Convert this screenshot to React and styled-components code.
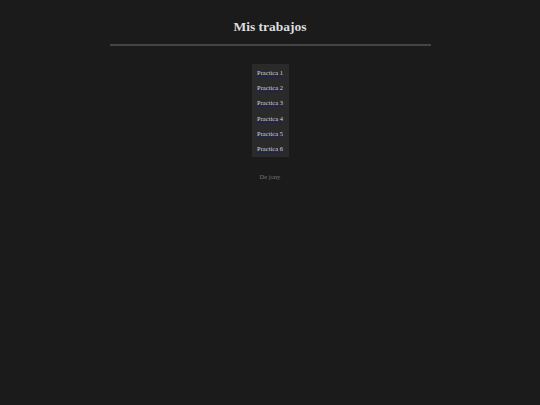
import styled, { createGlobalStyle } from "styled-components";

const GlobalStyle = createGlobalStyle`
  html, body {
    margin: 0;
    padding: 0;
    background-color: #1b1b1b;
    font-family: "Liberation Serif", "Times New Roman", serif;
  }
`;

const Page = styled.div`
  min-height: 405px;
  display: flex;
  flex-direction: column;
  align-items: center;
  padding-top: 18px;
  box-sizing: border-box;
`;

const Title = styled.h1`
  margin: 0;
  font-size: 13.5px;
  font-weight: bold;
  color: #dedede;
  line-height: 18px;
`;

const Divider = styled.hr`
  width: 321px;
  height: 0;
  margin: 8px 0 0 0;
  border: none;
  border-top: 2px solid #444;
`;

const Menu = styled.ul`
  list-style: none;
  margin: 18px 0 0 0;
  padding: 1px 5px;
  width: 27px;
  background-color: #2a2a2a;
  display: flex;
  flex-direction: column;
`;

const Item = styled.li`
  height: 15.2px;
  display: flex;
  align-items: center;
  justify-content: center;
  white-space: nowrap;
`;

const Link = styled.a`
  font-size: 6.5px;
  color: #d2d2de;
  text-decoration: underline;
  text-decoration-color: #1e1e6a;
`;

const Footer = styled.p`
  margin: 16px 0 0 0;
  font-size: 6.5px;
  color: #777;
`;

const practicas = [1, 2, 3, 4, 5, 6];

export default function App() {
  return (
    <>
      <GlobalStyle />
      <Page>
        <Title>Mis trabajos</Title>
        <Divider />
        <Menu>
          {practicas.map((n) => (
            <Item key={n}>
              <Link href="#">Practica {n}</Link>
            </Item>
          ))}
        </Menu>
        <Footer>De jony</Footer>
      </Page>
    </>
  );
}
